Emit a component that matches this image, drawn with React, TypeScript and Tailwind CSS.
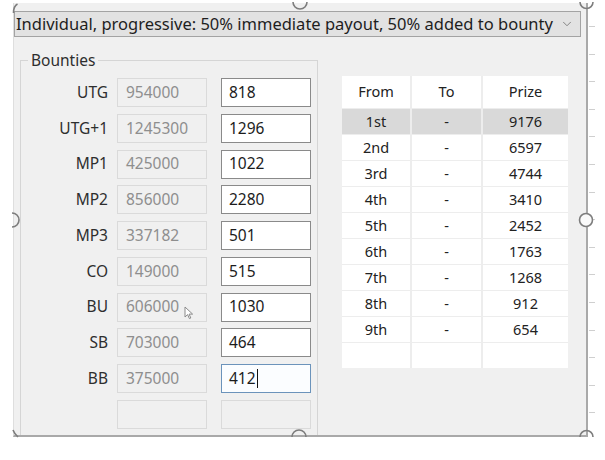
import { ChevronDown } from 'lucide-react'

const SEATS: Array<{ pos: string; stack: string; bounty: string }> = [
  { pos: 'UTG', stack: '954000', bounty: '818' },
  { pos: 'UTG+1', stack: '1245300', bounty: '1296' },
  { pos: 'MP1', stack: '425000', bounty: '1022' },
  { pos: 'MP2', stack: '856000', bounty: '2280' },
  { pos: 'MP3', stack: '337182', bounty: '501' },
  { pos: 'CO', stack: '149000', bounty: '515' },
  { pos: 'BU', stack: '606000', bounty: '1030' },
  { pos: 'SB', stack: '703000', bounty: '464' },
  { pos: 'BB', stack: '375000', bounty: '412' },
]

const PRIZES = [
  ['1st', '9176'],
  ['2nd', '6597'],
  ['3rd', '4744'],
  ['4th', '3410'],
  ['5th', '2452'],
  ['6th', '1763'],
  ['7th', '1268'],
  ['8th', '912'],
  ['9th', '654'],
]

function Pointer() {
  return (
    <svg className="absolute left-[66px] top-[12px]" width="10" height="14" viewBox="0 0 10 14">
      <path d="M1 1 L1 11 L3.6 8.6 L5.4 12.6 L6.8 12 L5.1 8.1 L8.6 8.1 Z" fill="#fff" stroke="#8a8a8a" strokeWidth="1" strokeLinejoin="round" />
    </svg>
  )
}

function SeatRow({ pos, stack, bounty, focused, hovered }: { pos: string; stack: string; bounty: string; focused?: boolean; hovered?: boolean }) {
  return (
    <div className="flex h-[29px] items-center">
      <div className="w-[87px] text-right text-[#2e2e2e]">{pos}</div>
      <div className="relative ml-[9px] flex h-full w-[90px] items-center border border-[#dadada] bg-[#f0f0f0] pl-[8px] text-[#8e8e8e]">
        {stack}
        {hovered && <Pointer />}
      </div>
      <div
        className={
          focused
            ? 'ml-[14px] flex h-full w-[90px] items-center border border-[#6b93bb] bg-[#fbfdff] pl-[7px] text-[#1c1c1c]'
            : 'ml-[14px] flex h-full w-[90px] items-center border border-[#8a8a8a] bg-white pl-[7px] text-[#1c1c1c]'
        }
      >
        {bounty}
        {focused && <span className="ml-[1px] h-[19px] w-px bg-[#111]" />}
      </div>
    </div>
  )
}

function PrizeTable() {
  return (
    <div className="mt-[39px] ml-[24px] flex flex-col gap-y-px bg-[#ededed] text-[14.5px] text-[#222]">
      <div className="flex h-[32px] gap-x-[2px]">
        <div className="flex w-[68px] items-center justify-center bg-white">From</div>
        <div className="flex w-[69px] items-center justify-center bg-white">To</div>
        <div className="flex w-[85px] items-center justify-center bg-white">Prize</div>
      </div>
      {PRIZES.map(([place, prize], i) => (
        <div key={place} className="flex h-[25px] gap-x-[2px]">
          <div className={i === 0 ? 'flex w-[68px] items-center justify-center bg-[#d9d9d9]' : 'flex w-[68px] items-center justify-center bg-white'}>{place}</div>
          <div className={i === 0 ? 'flex w-[69px] items-center justify-center bg-[#d9d9d9]' : 'flex w-[69px] items-center justify-center bg-white'}>-</div>
          <div className={i === 0 ? 'flex w-[85px] items-center justify-center bg-[#d9d9d9]' : 'flex w-[85px] items-center justify-center bg-white'}>{prize}</div>
        </div>
      ))}
      <div className="flex h-[25px] gap-x-[2px]">
        <div className="w-[68px] bg-white" />
        <div className="w-[69px] bg-white" />
        <div className="w-[85px] bg-white" />
      </div>
    </div>
  )
}

// designer grab handles around the selected form
function Handles() {
  return (
    <svg className="pointer-events-none absolute left-0 top-0" width="605" height="460" viewBox="0 0 605 460">
      <g fill="none" stroke="#7d7d7d" strokeWidth="1.6">
        <path d="M13.5 13 Q13.5 6 17.5 4" />
        <path d="M293 2 A7 7 0 0 0 307 2" />
        <path d="M580 2 A6.5 6.5 0 0 0 593 2" />
        <path d="M12 213 A7 7 0 0 1 12 227" />
        <circle cx="586" cy="220" r="6.5" fill="#fafafa" />
        <path d="M13 430 Q14.5 434 18 437" />
        <path d="M292 437 A7 7 0 0 1 306 437" />
        <path d="M580 437 A6.5 6.5 0 0 1 593 437" />
      </g>
    </svg>
  )
}

export default function App() {
  return (
    <div className="relative h-[460px] w-[605px] overflow-hidden bg-white font-['Noto_Sans',sans-serif] text-[15.5px]">
      <div className="flex">
        <div className="ml-[13px] mt-[3px] flex h-[434px] w-[575px] flex-col overflow-hidden border-b-2 border-l border-r-2 border-[#a9a9a9] border-l-[#dedede] bg-[#f0f0f0]">
          <div className="mt-[8px] flex h-[26px] w-[567px] items-center justify-between border border-[#a3a3a3] bg-[#e2e2e2] pl-[1px] pr-[6px] text-[16.5px] text-[#1e1e1e]">
            <span>Individual, progressive: 50% immediate payout, 50% added to bounty</span>
            <ChevronDown size={14} strokeWidth={1.4} className="text-[#6e6e6e]" />
          </div>
          <div className="flex items-start">
            <fieldset className="mt-[12px] ml-[6px] h-[400px] w-[298px] border border-[#d5d5d5]">
              <legend className="ml-[7px] px-[3px] leading-[22px] text-[#2e2e2e]">Bounties</legend>
              <div className="mt-[7px] flex flex-col gap-y-[6.75px]">
                {SEATS.map((s) => (
                  <SeatRow key={s.pos} {...s} focused={s.pos === 'BB'} hovered={s.pos === 'BU'} />
                ))}
                <div className="flex h-[29px]">
                  <div className="w-[87px]" />
                  <div className="ml-[9px] w-[90px] border border-[#dadada] bg-[#f0f0f0]" />
                  <div className="ml-[14px] w-[90px] border border-[#dadada] bg-[#f0f0f0]" />
                </div>
              </div>
            </fieldset>
            <PrizeTable />
          </div>
        </div>
        <div className="ml-[1px] mt-[26px] flex flex-col gap-y-[26.6px]">
          {Array.from({ length: 15 }, (_, i) => (
            <div key={i} className="h-px w-[6px] bg-[#cfcfcf]" />
          ))}
        </div>
      </div>
      <Handles />
    </div>
  )
}
